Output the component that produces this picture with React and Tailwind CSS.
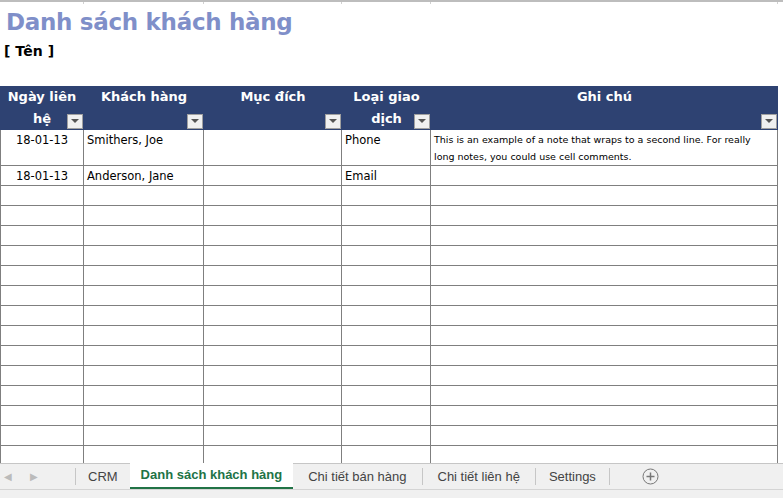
import React from "react";

const cols = ["w-[84px]", "w-[120px]", "w-[138px]", "w-[89px]", "w-[347px]"];
const F = { fontFamily: '"DejaVu Sans", Verdana, sans-serif' };

function Drop() {
  return (
    <span className="inline-flex items-center justify-center w-[16px] h-[15px] bg-[#f0f0f0] border border-[#a0a0a0]">
      <svg width="8" height="5" viewBox="0 0 8 5"><path d="M0 0h8L4 4z" fill="#555" /></svg>
    </span>
  );
}

function Row({ cells, h = "h-[20px]" }) {
  return (
    <div className={`flex ${h}`}>
      {cols.map((c, i) => (
        <div key={i} className={`${c} shrink-0 border-r border-b border-[#7f7f7f] ${i === 0 ? "border-l" : ""} px-[3px] pt-[2px] text-[11.5px] text-black overflow-hidden ${i === 0 ? "text-center" : ""}`}>
          {cells && cells[i]}
        </div>
      ))}
    </div>
  );
}

export default function App() {
  const heads = [["Ngày liên", "hệ"], ["Khách hàng", ""], ["Mục đích", ""], ["Loại giao", "dịch"], ["Ghi chú", ""]];
  return (
    <div className="w-[783px] h-[498px] bg-white overflow-hidden flex flex-col" style={F}>
      <div className="h-[86px] shrink-0 relative border-t-2 border-[#bdbdbd]">
        <div className="flex h-[2px]">
          {cols.map((c, i) => <div key={i} className={`${c} border-r border-[#d0d0d0]`} />)}
        </div>
        <div className="pl-[6px] pt-[3px] text-[23px] font-bold text-[#7f8fc9] leading-[30px] tracking-[-0.3px]">Danh sách khách hàng</div>
        <div className="pl-[4px] pt-[6px] text-[14px] font-bold text-black leading-[16px]">[ Tên ]</div>
      </div>
      <div className="flex h-[44px] shrink-0">
        {heads.map(([a, b], i) => (
          <div key={i} className={`${cols[i]} shrink-0 relative bg-[#2e4272] text-white font-bold text-[13px] text-center`}>
            <div className="leading-[22px]">{a}</div>
            <div className="leading-[22px]">{b}</div>
            <div className="absolute right-[1px] bottom-[1px]"><Drop /></div>
          </div>
        ))}
      </div>
      <div className="flex-1 overflow-hidden">
        <Row h="h-[36px]" cells={["18-01-13", "Smithers, Joe", "", "Phone",
          <div className="text-[9.5px] leading-[17px] -mt-[1px]">This is an example of a note that wraps to a second line. For really long notes, you could use cell comments.</div>]} />
        <Row cells={["18-01-13", "Anderson, Jane", "", "Email", ""]} />
        {Array.from({ length: 14 }).map((_, i) => <Row key={i} />)}
      </div>
      <div className="h-[26px] shrink-0 bg-[#f0f0f0] border-t border-[#c6c6c6] flex items-stretch text-[13px] text-[#444]" style={{ fontFamily: '"Liberation Sans Narrow", "Liberation Sans", sans-serif' }}>
        <div className="w-[75px] flex items-center gap-[18px] pl-[4px] text-[#bbb] text-[10px]"><span>◀</span><span>▶</span></div>
        <div className="border-l border-[#c6c6c6] my-[4px]" />
        <div className="px-[12px] flex items-center">CRM</div>
        <div className="px-[11px] flex items-center bg-white font-bold text-[#217346] border-b-2 border-[#217346] -mt-px">Danh sách khách hàng</div>
        <div className="px-[15px] flex items-center">Chi tiết bán hàng</div>
        <div className="border-l border-[#c6c6c6] my-[4px]" />
        <div className="px-[15px] flex items-center">Chi tiết liên hệ</div>
        <div className="border-l border-[#c6c6c6] my-[4px]" />
        <div className="px-[13px] flex items-center">Settings</div>
        <div className="border-l border-[#c6c6c6] my-[4px]" />
        <div className="pl-[32px] flex items-center">
          <svg width="17" height="17" viewBox="0 0 17 17"><circle cx="8.5" cy="8.5" r="7.5" fill="none" stroke="#777" /><path d="M8.5 4.5v8M4.5 8.5h8" stroke="#777" strokeWidth="1.5" /></svg>
        </div>
      </div>
      <div className="h-[9px] shrink-0 bg-[#f0f0f0] border-t border-[#d4d4d4]" />
    </div>
  );
}
